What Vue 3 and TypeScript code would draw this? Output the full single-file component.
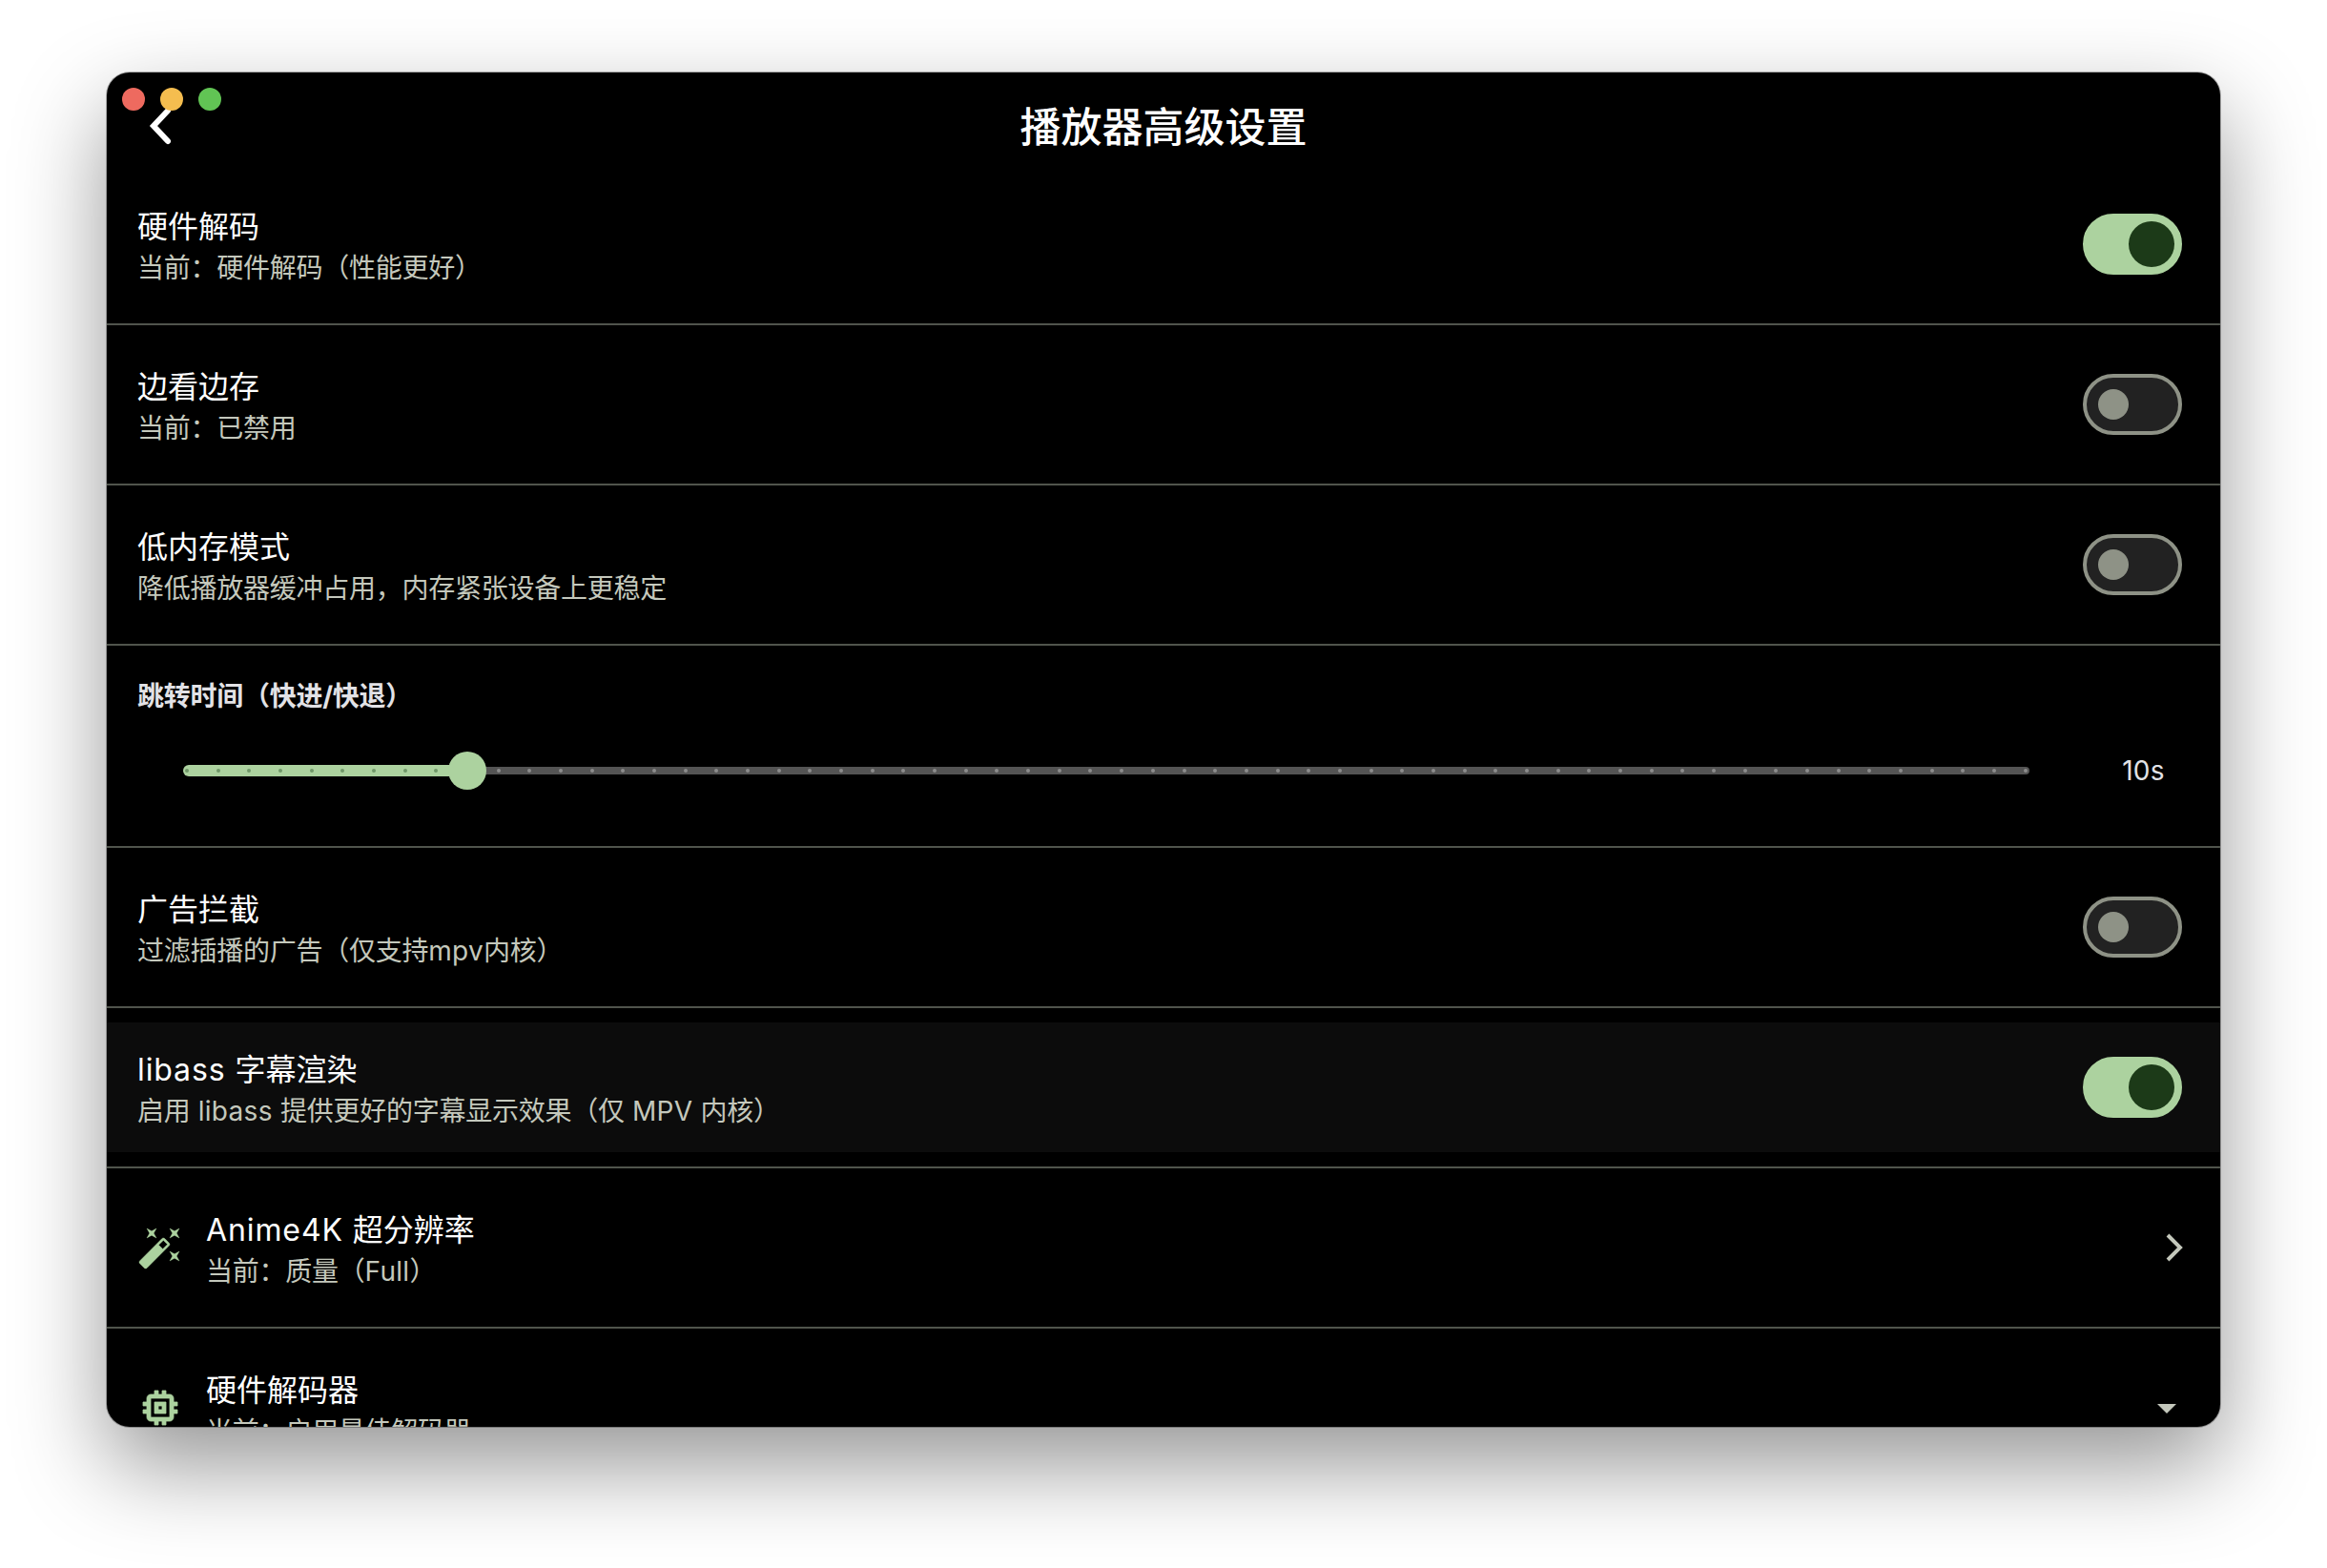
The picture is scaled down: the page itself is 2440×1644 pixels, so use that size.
<script setup lang="ts">
interface Row {
  title: string
  sub: string
  on?: boolean
  hl?: boolean
  icon?: 'wand' | 'chip'
  trail?: 'chevron' | 'drop'
}

const topRows: Row[] = [
  { title: '硬件解码', sub: '当前：硬件解码（性能更好）', on: true },
  { title: '边看边存', sub: '当前：已禁用', on: false },
  { title: '低内存模式', sub: '降低播放器缓冲占用，内存紧张设备上更稳定', on: false },
]

const bottomRows: Row[] = [
  { title: '广告拦截', sub: '过滤插播的广告（仅支持mpv内核）', on: false },
  { title: 'libass 字幕渲染', sub: '启用 libass 提供更好的字幕显示效果（仅 MPV 内核）', on: true, hl: true },
  { title: 'Anime4K 超分辨率', sub: '当前：质量（Full）', icon: 'wand', trail: 'chevron' },
  { title: '硬件解码器', sub: '当前：启用最佳解码器', icon: 'chip', trail: 'drop' },
]

const ticks = Array.from({ length: 60 }, (_, i) => i)
const activeWidth = 298

// Latin runs are spaced a little wider than the CJK text around them.
const parts = (s: string) =>
  s.split(/([A-Za-z0-9 ]+)/).filter(Boolean).map((text) => ({ text, lat: /^[A-Za-z0-9 ]+$/.test(text) }))
</script>

<template>
  <div class="page">
    <div class="window">
      <div class="lights">
        <span class="light red"></span>
        <span class="light yellow"></span>
        <span class="light green"></span>
      </div>
      <header class="appbar">
        <svg class="back" width="48" height="48" viewBox="0 0 48 48">
          <path d="M32 8 L17 24 L32 40" fill="none" stroke="#fff" stroke-width="6" stroke-linecap="round" stroke-linejoin="miter" />
        </svg>
        <h1 class="title">播放器高级设置</h1>
      </header>

      <template v-for="row in topRows" :key="row.title">
        <div class="row">
          <div class="texts">
            <div class="t">{{ row.title }}</div>
            <div class="s">{{ row.sub }}</div>
          </div>
          <div class="switch" :class="{ on: row.on }"><span class="knob"></span></div>
        </div>
        <div class="divider"></div>
      </template>

      <div class="slider-row">
        <div class="slider-title">跳转时间（快进/快退）</div>
        <div class="slider-line">
          <div class="slider">
            <div class="track-active" :style="{ width: activeWidth + 'px' }"></div>
            <div class="track-rest"></div>
            <div class="ticks">
              <span v-for="i in ticks" :key="i" class="tick" :class="{ done: i < 9 }"></span>
            </div>
            <span class="thumb" :style="{ left: activeWidth - 20 + 'px' }"></span>
          </div>
          <div class="value">10s</div>
        </div>
      </div>
      <div class="divider"></div>

      <template v-for="(row, idx) in bottomRows" :key="row.title">
        <div class="row" :class="{ hl: row.hl }">
          <svg v-if="row.icon === 'wand'" class="lead" width="48" height="48" viewBox="0 0 24 24" fill="#acd29f" stroke="#acd29f" stroke-width="0.2">
            <path d="M7.5 5.6L10 7 8.6 4.5 10 2 7.5 3.4 5 2l1.4 2.5L5 7zm12 9.8L17 14l1.4 2.5L17 19l2.5-1.4L22 19l-1.4-2.5L22 14zM22 2l-2.5 1.4L17 2l1.4 2.5L17 7l2.5-1.4L22 7l-1.4-2.5zm-7.63 5.29c-.39-.39-1.02-.39-1.41 0L1.29 18.96c-.39.39-.39 1.02 0 1.41l2.34 2.34c.39.39 1.02.39 1.41 0L16.7 11.05c.39-.39.39-1.02 0-1.41l-2.33-2.35zm-1.03 5.49l-2.12-2.12 2.44-2.44 2.12 2.12-2.44 2.44z" />
          </svg>
          <svg v-if="row.icon === 'chip'" class="lead" width="48" height="48" viewBox="0 0 24 24" fill="#acd29f" stroke="#acd29f" stroke-width="0.4">
            <path d="M15 9H9v6h6V9zm-2 4h-2v-2h2v2zm8-2V9h-2V7c0-1.1-.9-2-2-2h-2V3h-2v2h-2V3H9v2H7c-1.1 0-2 .9-2 2v2H3v2h2v2H3v2h2v2c0 1.1.9 2 2 2h2v2h2v-2h2v2h2v-2h2c1.1 0 2-.9 2-2v-2h2v-2h-2v-2h2zm-4 6H7V7h10v10z" />
          </svg>
          <div class="texts">
            <div class="t"><span v-for="(p, i) in parts(row.title)" :key="i" :class="{ lat: p.lat }">{{ p.text }}</span></div>
            <div class="s"><span v-for="(p, i) in parts(row.sub)" :key="i" :class="{ lat: p.lat }">{{ p.text }}</span></div>
          </div>
          <svg v-if="row.trail === 'chevron'" class="trail" width="48" height="48" viewBox="0 0 48 48">
            <path d="M25 11 L38 24 L25 37" fill="none" stroke="#c4c8bc" stroke-width="4" />
          </svg>
          <svg v-else-if="row.trail === 'drop'" class="trail" width="48" height="48" viewBox="0 0 24 24" fill="#c4c8bc">
            <path d="M7 10l5 5 5-5z" />
          </svg>
          <div v-else class="switch" :class="{ on: row.on }"><span class="knob"></span></div>
        </div>
        <div v-if="idx < bottomRows.length - 1" class="divider"></div>
      </template>
    </div>
  </div>
</template>

<style>
html, body { margin: 0; background: #fff; overflow: hidden; }
</style>

<style scoped>
.page {
  width: 2440px;
  height: 1644px;
  padding: 76px 112px 148px;
  box-sizing: border-box;
  background: #fff;
  font-family: Inter, "Noto Sans CJK SC", sans-serif;
}
.window {
  position: relative;
  height: 1420px;
  border-radius: 24px;
  background: #000;
  overflow: hidden;
  color: #fff;
  box-shadow: 0 0 0 1px rgba(0, 0, 0, 0.28), 0 40px 96px rgba(0, 0, 0, 0.42);
}
.lights {
  position: absolute;
  z-index: 2;
  left: 16px;
  top: 16px;
  display: flex;
  gap: 16px;
}
.light { width: 24px; height: 24px; border-radius: 50%; }
.red { background: #ee6a5f; }
.yellow { background: #f5bd4f; }
.green { background: #61c454; }
.appbar {
  position: relative;
  height: 112px;
  display: flex;
  align-items: center;
  justify-content: center;
}
.back { position: absolute; left: 32px; top: 32px; overflow: visible; }
.title {
  margin: 0;
  padding-top: 2px;
  font-size: 43px;
  line-height: 56px;
  font-weight: 500;
  color: #fff;
}
.row {
  height: 136px;
  display: flex;
  align-items: center;
  padding: 0 32px;
  box-sizing: border-box;
}
.row.hl { background: #0c0c0c; }
.lead { flex: none; margin-right: 24px; }
.texts { flex: 1; min-width: 0; padding-top: 2px; }
.t { font-size: 32px; line-height: 48px; color: #fff; }
.t .lat { letter-spacing: 0.9px; }
.s { margin-top: -1px; font-size: 28px; line-height: 40px; letter-spacing: -0.25px; color: #c4c8bc; }
.s .lat { letter-spacing: 0.3px; }
.trail { flex: none; }
.divider {
  height: 32px;
  display: flex;
  align-items: center;
}
.divider::before {
  content: "";
  flex: 1;
  height: 2px;
  background: #50544c;
}
.switch {
  flex: none;
  width: 104px;
  height: 64px;
  margin-right: 8px;
  box-sizing: border-box;
  border-radius: 32px;
  border: 4px solid #8e9286;
  background: #222;
  display: flex;
  align-items: center;
  padding-left: 12px;
}
.knob { width: 32px; height: 32px; border-radius: 50%; background: #8e9286; }
.switch.on { background: #acd29f; border-color: #acd29f; padding-left: 44px; }
.switch.on .knob { width: 48px; height: 48px; background: #1c3a18; }
.slider-row {
  height: 180px;
  padding: 18px 32px 0;
  box-sizing: border-box;
}
.slider-title {
  font-size: 28px;
  line-height: 40px;
  font-weight: 700;
  letter-spacing: -0.25px;
  color: #e2e2e6;
}
.slider-line {
  display: flex;
  align-items: center;
  height: 80px;
  margin-top: 18px;
  padding-left: 48px;
}
.slider {
  position: relative;
  flex: 1;
  height: 40px;
  display: flex;
  align-items: center;
  margin-right: 71px;
}
.track-active { height: 12px; border-radius: 6px 0 0 6px; background: #acd29f; }
.track-rest { flex: 1; height: 8px; border-radius: 0 4px 4px 0; background: #545454; }
.ticks {
  position: absolute;
  inset: 0;
  padding: 0 2px;
  display: flex;
  align-items: center;
  justify-content: space-between;
}
.tick { width: 4px; height: 4px; border-radius: 50%; background: #8c8c8c; }
.tick.done { background: #6f9868; }
.thumb {
  position: absolute;
  top: 0;
  width: 40px;
  height: 40px;
  border-radius: 50%;
  background: #acd29f;
}
.value {
  width: 97px;
  text-align: center;
  font-size: 28px;
  line-height: 40px;
  letter-spacing: 0.3px;
  color: #e2e2e6;
}
</style>
